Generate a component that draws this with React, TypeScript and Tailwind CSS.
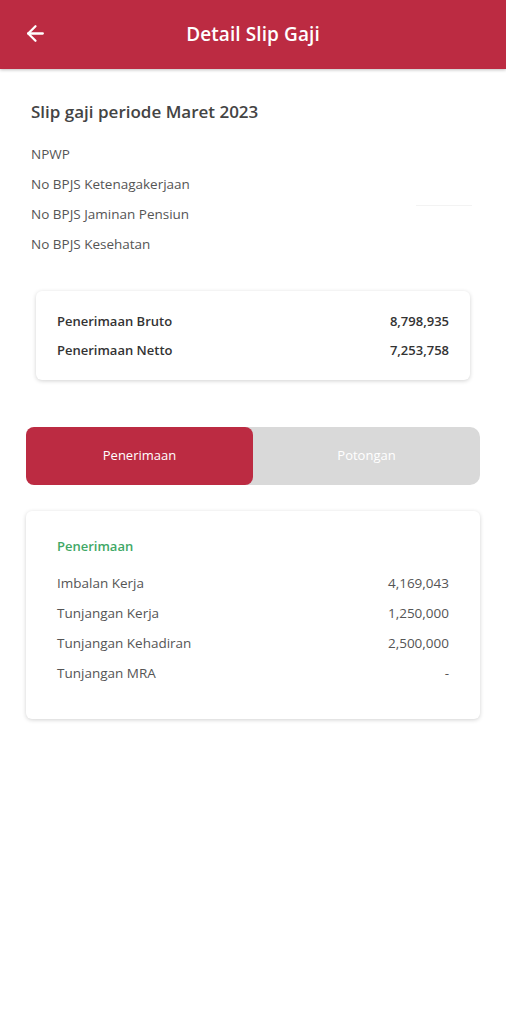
import { ArrowLeft } from "lucide-react";

const font = { fontFamily: '"Open Sans", "Noto Sans", sans-serif' };

const idRows = ["NPWP", "No BPJS Ketenagakerjaan", "No BPJS Jaminan Pensiun", "No BPJS Kesehatan"];

const earnings = [
  { label: "Imbalan Kerja", value: "4,169,043" },
  { label: "Tunjangan Kerja", value: "1,250,000" },
  { label: "Tunjangan Kehadiran", value: "2,500,000" },
  { label: "Tunjangan MRA", value: "-" },
];

export default function App() {
  return (
    <div className="min-h-[1024px] w-[506px] bg-white" style={font}>
      {/* Header */}
      <header className="relative flex h-[69px] items-center justify-center bg-[#bc2b42] shadow-[0_1px_3px_rgba(0,0,0,0.25)]">
        <button className="absolute left-[23px] top-[21px] text-white">
          <ArrowLeft size={25} strokeWidth={2.2} />
        </button>
        <h1 className="text-[19px] font-semibold tracking-[0.1px] text-white">Detail Slip Gaji</h1>
      </header>

      <div className="px-[31px] pt-[30px]">
        <h2 className="text-[17px] font-semibold text-[#444]">Slip gaji periode Maret 2023</h2>

        <div className="mt-[20px] flex flex-col gap-[11px]">
          {idRows.map((row, i) => (
            <div key={row} className="relative text-[13.5px] leading-[19px] text-[#555]">
              {row}
              {i === 1 && (
                <div className="absolute right-[3px] top-[30px] h-[1px] w-[56px] bg-[#f3f3f3]" />
              )}
            </div>
          ))}
        </div>
      </div>

      {/* Summary card */}
      <div className="mx-[36px] mt-[37px] flex flex-col gap-[11px] rounded-[6px] bg-white px-[21px] py-[21px] shadow-[0_1px_4px_rgba(0,0,0,0.18)]">
        <div className="flex items-center justify-between text-[13px] font-semibold leading-[18px] text-[#333]">
          <span>Penerimaan Bruto</span>
          <span>8,798,935</span>
        </div>
        <div className="flex items-center justify-between text-[13px] font-semibold leading-[18px] text-[#333]">
          <span>Penerimaan Netto</span>
          <span>7,253,758</span>
        </div>
      </div>

      {/* Tabs */}
      <div className="mx-[26px] mt-[47px] flex h-[58px] rounded-[10px] bg-[#d9d9d9]">
        <button className="flex flex-1 items-center justify-center rounded-[8px] bg-[#bc2b42] text-[13px] text-white">
          Penerimaan
        </button>
        <button className="flex flex-1 items-center justify-center text-[13px] text-white">
          Potongan
        </button>
      </div>

      {/* Detail card */}
      <div className="mx-[26px] mt-[26px] rounded-[6px] bg-white px-[31px] pb-[36px] pt-[26px] shadow-[0_1px_4px_rgba(0,0,0,0.18)]">
        <div className="text-[13px] font-semibold leading-[18px] text-[#3fa866]">Penerimaan</div>
        <div className="mt-[19px] flex flex-col gap-[11px]">
          {earnings.map((e) => (
            <div key={e.label} className="flex items-center justify-between text-[13.5px] leading-[19px] text-[#555]">
              <span>{e.label}</span>
              <span>{e.value}</span>
            </div>
          ))}
        </div>
      </div>
    </div>
  );
}
